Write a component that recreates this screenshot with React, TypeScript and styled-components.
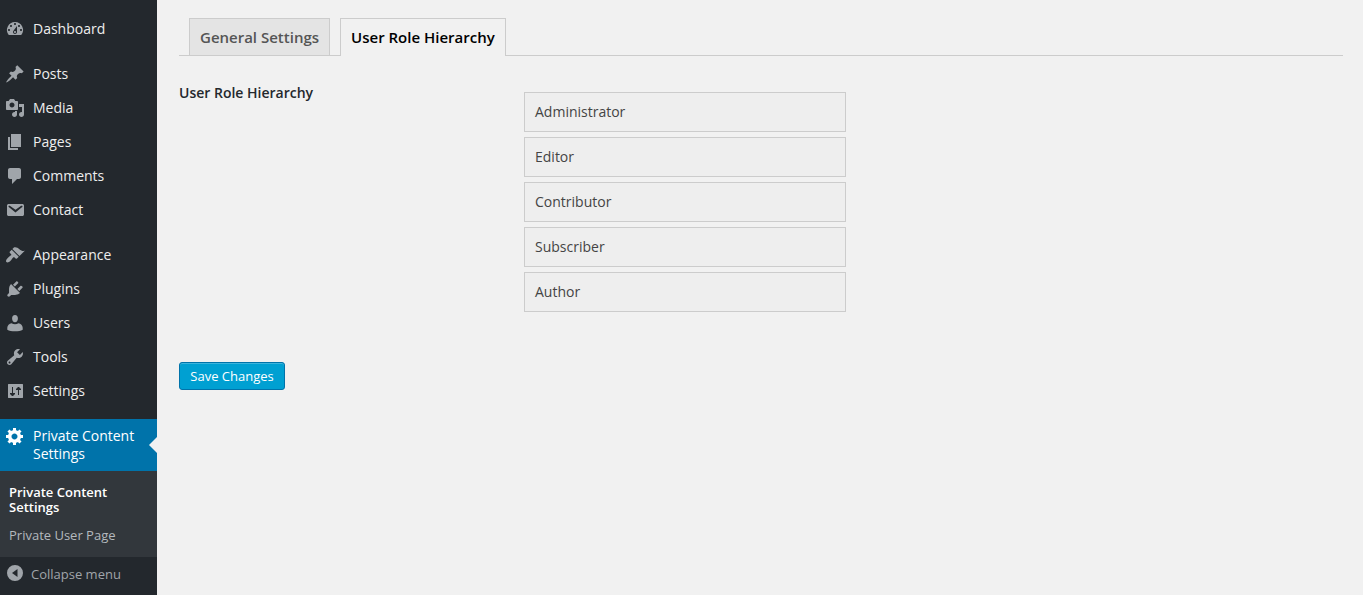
import React from "react";
import styled, { createGlobalStyle } from "styled-components";

const GlobalStyle = createGlobalStyle`
  *, *::before, *::after { box-sizing: border-box; }
  body {
    margin: 0;
    background: #f1f1f1;
    color: #444;
    font-family: "Open Sans", sans-serif;
    font-size: 14px;
    line-height: 18px;
  }
  ul { list-style: none; margin: 0; padding: 0; }
`;

const Shell = styled.div`
  display: flex;
  min-height: 100vh;
`;

const Sidebar = styled.nav`
  flex: none;
  width: 157px;
  padding-top: 12px;
  background: #23282d;
`;

const MenuGroup = styled.ul`
  margin-bottom: 11px;
`;

const MenuLink = styled.a<{ $active?: boolean }>`
  position: relative;
  display: flex;
  align-items: flex-start;
  gap: 8px;
  padding: 8px 8px 8px 5px;
  color: ${(p) => (p.$active ? "#fff" : "#eee")};
  background: ${(p) => (p.$active ? "#0073aa" : "transparent")};
  text-decoration: none;

  &::after {
    content: ${(p) => (p.$active ? '""' : "none")};
    position: absolute;
    top: 50%;
    right: 0;
    transform: translateY(-50%);
    border: 8px solid transparent;
    border-left-width: 0;
    border-right-color: #f1f1f1;
  }
`;

const Glyph = styled.svg<{ $active?: boolean }>`
  flex: none;
  width: 20px;
  height: 20px;
  margin: -1px 0;
  fill: ${(p) => (p.$active ? "#fff" : "#a0a5aa")};
`;

const Submenu = styled.ul`
  display: grid;
  gap: 1px;
  padding: 8px 0;
  background: #32373c;
`;

const SubmenuLink = styled.a<{ $current?: boolean }>`
  display: block;
  padding: 6px 9px;
  color: ${(p) => (p.$current ? "#fff" : "#b4b9be")};
  font-size: 13px;
  font-weight: ${(p) => (p.$current ? 600 : 400)};
  line-height: 15px;
  text-decoration: none;
`;

const CollapseButton = styled.button`
  display: flex;
  align-items: center;
  gap: 6px;
  width: 100%;
  height: 34px;
  padding: 0 5px;
  border: 0;
  background: transparent;
  color: #a0a5aa;
  font: inherit;
  font-size: 13px;
  cursor: pointer;
`;

const Content = styled.main`
  flex: 1;
  min-width: 0;
  padding: 18px 20px 20px 22px;
`;

const Tabs = styled.nav`
  display: flex;
  gap: 10px;
  padding-left: 10px;
  border-bottom: 1px solid #ccc;
`;

const Tab = styled.a<{ $active?: boolean }>`
  margin-bottom: ${(p) => (p.$active ? "-1px" : "0")};
  padding: ${(p) => (p.$active ? "6px 10px 7px" : "6px 10px")};
  border: 1px solid #ccc;
  border-bottom: 0;
  background: ${(p) => (p.$active ? "#f1f1f1" : "#e4e4e4")};
  color: ${(p) => (p.$active ? "#000" : "#555")};
  font-size: 15px;
  font-weight: 600;
  line-height: 24px;
  text-decoration: none;
  white-space: nowrap;
`;

const FormRow = styled.section`
  display: grid;
  grid-template-columns: 345px minmax(0, 322px);
  padding: 36px 0 50px;
`;

const RowTitle = styled.h2`
  margin: -8px 0 0;
  color: #23282d;
  font-size: 14px;
  font-weight: 600;
  line-height: 18px;
`;

const RoleList = styled.ul`
  display: grid;
  gap: 5px;
`;

const RoleItem = styled.li`
  padding: 10px;
  border: 1px solid #ccc;
  background: #eee;
  cursor: move;
`;

const SaveButton = styled.button`
  min-width: 106px;
  height: 28px;
  padding: 0 10px;
  border: 1px solid #0073aa;
  border-radius: 3px;
  background: #00a0d2;
  box-shadow: inset 0 1px 0 rgba(120, 200, 230, 0.5);
  color: #fff;
  font: inherit;
  font-size: 13px;
  line-height: 26px;
  white-space: nowrap;
  cursor: pointer;
`;

const icons = {
  dashboard:
    "M3.76 16h12.48A7.998 7.998 0 0 0 10 3a7.998 7.998 0 0 0-6.24 13zM10 4c.55 0 1 .45 1 1s-.45 1-1 1-1-.45-1-1 .45-1 1-1zM6 6c.55 0 1 .45 1 1s-.45 1-1 1-1-.45-1-1 .45-1 1-1zm8 0c.55 0 1 .45 1 1s-.45 1-1 1-1-.45-1-1 .45-1 1-1zm-5.37 5.55L12 7v6c0 1.1-.9 2-2 2s-2-.9-2-2c0-.57.24-1.08.63-1.45zM4 10c.55 0 1 .45 1 1s-.45 1-1 1-1-.45-1-1 .45-1 1-1zm12 0c.55 0 1 .45 1 1s-.45 1-1 1-1-.45-1-1 .45-1 1-1zm-5 3c0-.55-.45-1-1-1s-1 .45-1 1 .45 1 1 1 1-.45 1-1z",
  pin: "M10.44 3.02l1.82-1.82 6.36 6.35-1.83 1.82c-1.05-.68-2.48-.57-3.41.36l-.75.75c-.92.93-1.04 2.35-.35 3.41l-1.83 1.82-2.41-2.41-2.8 2.79c-.42.42-3.38 2.71-3.8 2.29s1.86-3.39 2.28-3.81l2.79-2.79L4.1 9.36l1.83-1.82c1.05.69 2.48.57 3.4-.36l.75-.75c.93-.92 1.05-2.35.36-3.41z",
  media:
    "M13 11V4c0-.55-.45-1-1-1h-1.67L9 1H5L3.67 3H2c-.55 0-1 .45-1 1v7c0 .55.45 1 1 1h10c.55 0 1-.45 1-1zM7 4.5c1.38 0 2.5 1.12 2.5 2.5S8.38 9.5 7 9.5 4.5 8.38 4.5 7 5.62 4.5 7 4.5zM14 6h5v10.5c0 1.38-1.12 2.5-2.5 2.5S14 17.88 14 16.5s1.12-2.5 2.5-2.5c.17 0 .34.02.5.05V9h-3V6zm-4 8.05V13h2v3.5c0 1.38-1.12 2.5-2.5 2.5S7 17.88 7 16.5 8.12 14 9.5 14c.17 0 .34.02.5.05z",
  page: "M6 15V2h10v13H6zm-1 1h8v2H3V5h2v11z",
  comment:
    "M5 2h9c1.1 0 2 .9 2 2v7c0 1.1-.9 2-2 2h-2l-5 5v-5H5c-1.1 0-2-.9-2-2V4c0-1.1.9-2 2-2z",
  email:
    "M3.87 4h13.25C18.37 4 19 4.59 19 5.79v8.42c0 1.19-.63 1.79-1.88 1.79H3.87c-1.25 0-1.88-.6-1.88-1.79V5.79c0-1.2.63-1.79 1.88-1.79zm6.62 8.6l6.74-5.53c.24-.2.43-.66.13-1.07-.29-.41-.82-.42-1.17-.17l-5.7 3.86L4.8 5.83c-.35-.25-.88-.24-1.17.17-.3.41-.11.87.13 1.07z",
  brush:
    "M14.48 11.06L7.41 3.99l1.5-1.5c.5-.56 2.3-.47 3.51.32 1.21.8 1.43 1.28 2.91 2.1 1.18.64 2.45 1.26 4.45.85zm-.71.71L6.7 4.7 4.93 6.47c-.39.39-.39 1.02 0 1.41l1.06 1.06c.39.39.39 1.03 0 1.42-.6.6-1.43 1.11-2.21 1.69-.35.26-.7.53-1.01.84C1.43 14.23.4 16.08 1.4 17.07c.99 1 2.84-.03 4.18-1.36.31-.31.58-.66.85-1.02.57-.78 1.08-1.61 1.69-2.21.39-.39 1.02-.39 1.41 0l1.06 1.06c.39.39 1.02.39 1.41 0z",
  plug: "M13.11 4.36L9.87 7.6 8 5.73l3.24-3.24c.35-.34 1.05-.2 1.56.32.52.51.66 1.21.31 1.55zm-8 1.77l.91-1.12 9.01 9.01-1.19.84c-.71.71-2.63 1.16-3.82 1.16H6.14L4.9 17.26c-.59.59-1.54.59-2.12 0-.59-.58-.59-1.53 0-2.12l1.24-1.24v-3.88c0-1.13.4-3.19 1.09-3.89zm7.26 3.97l3.24-3.24c.34-.35 1.04-.21 1.55.31.52.51.66 1.21.31 1.55l-3.24 3.25z",
  user: "M10 2c1.9 0 2.9 1.5 2.9 3.4S11.7 9.300 10 9.300 7.100 7.300 7.100 5.400 8.100 2 10 2zM6.600 10.200c1 .7 2.100 1 3.400 1s2.400-.3 3.400-1c2.400.2 4.300 2.300 4.300 4.600v1.900c-1.700 1-4.600 1.500-7.700 1.500s-6-.5-7.700-1.500v-1.900c0-2.300 1.900-4.400 4.300-4.600z",
  wrench:
    "M16.68 9.77c-1.34 1.34-3.3 1.67-4.95.99l-5.41 6.52c-.99.99-2.59.99-3.58 0s-.99-2.59 0-3.57l6.52-5.42c-.68-1.65-.35-3.61.99-4.95 1.28-1.28 3.12-1.62 4.72-1.06l-2.89 2.89 2.82 2.82 2.86-2.87c.53 1.58.18 3.39-1.08 4.65zM3.81 16.21c.4.39 1.04.39 1.43 0 .4-.4.4-1.04 0-1.43-.39-.4-1.03-.4-1.43 0-.39.39-.39 1.03 0 1.43z",
  sliders:
    "M3.500 3h14c.3 0 .5.2.5.5v13c0 .3-.2.5-.5.5h-14c-.3 0-.5-.2-.5-.5v-13c0-.3.2-.5.5-.5zM7 6v6H5v1l2 2h1l2-2v-1H8V6zM13 14V9h-2V8l2-2h1l2 2v1h-2v5z",
  gear: "M18 12h-2.18c-.17.7-.44 1.35-.81 1.93l1.54 1.54-2.1 2.1-1.54-1.54c-.58.36-1.23.63-1.91.79V19H8v-2.18c-.68-.16-1.33-.43-1.91-.79l-1.54 1.54-2.12-2.12 1.54-1.54c-.36-.58-.63-1.23-.79-1.91H1V9.03h2.17c.16-.7.44-1.35.8-1.94L2.43 5.55l2.1-2.1 1.54 1.54c.58-.37 1.24-.64 1.93-.81V2h3v2.18c.68.16 1.33.43 1.91.79l1.54-1.54 2.12 2.12-1.54 1.54c.36.59.64 1.24.8 1.94H18V12zm-8.5 1.5c1.66 0 3-1.34 3-3s-1.34-3-3-3-3 1.34-3 3 1.34 3 3 3z",
  collapse:
    "M10 1a8 8 0 1 0 0 16a8 8 0 1 0 0-16zM12.500 5v8L7 9z",
};

type IconName = keyof typeof icons;

function Icon({ name, active }: { name: IconName; active?: boolean }) {
  return (
    <Glyph viewBox="0 0 20 20" aria-hidden="true" $active={active}>
      <path fillRule="evenodd" d={icons[name]} />
    </Glyph>
  );
}

const menuGroups: { label: string; icon: IconName }[][] = [
  [{ label: "Dashboard", icon: "dashboard" }],
  [
    { label: "Posts", icon: "pin" },
    { label: "Media", icon: "media" },
    { label: "Pages", icon: "page" },
    { label: "Comments", icon: "comment" },
    { label: "Contact", icon: "email" },
  ],
  [
    { label: "Appearance", icon: "brush" },
    { label: "Plugins", icon: "plug" },
    { label: "Users", icon: "user" },
    { label: "Tools", icon: "wrench" },
    { label: "Settings", icon: "sliders" },
  ],
];

const roles = ["Administrator", "Editor", "Contributor", "Subscriber", "Author"];

export default function App() {
  return (
    <>
      <GlobalStyle />
      <Shell>
        <Sidebar>
          {menuGroups.map((group) => (
            <MenuGroup key={group[0].label}>
              {group.map((item) => (
                <li key={item.label}>
                  <MenuLink href="#">
                    <Icon name={item.icon} />
                    <span>{item.label}</span>
                  </MenuLink>
                </li>
              ))}
            </MenuGroup>
          ))}
          <ul>
            <li>
              <MenuLink href="#" $active>
                <Icon name="gear" active />
                <span>Private Content Settings</span>
              </MenuLink>
              <Submenu>
                <li>
                  <SubmenuLink href="#" $current>
                    Private Content Settings
                  </SubmenuLink>
                </li>
                <li>
                  <SubmenuLink href="#">Private User Page</SubmenuLink>
                </li>
              </Submenu>
            </li>
          </ul>
          <CollapseButton type="button">
            <Icon name="collapse" />
            <span>Collapse menu</span>
          </CollapseButton>
        </Sidebar>
        <Content>
          <Tabs>
            <Tab href="#">General Settings</Tab>
            <Tab href="#" $active>
              User Role Hierarchy
            </Tab>
          </Tabs>
          <FormRow>
            <RowTitle>User Role Hierarchy</RowTitle>
            <RoleList>
              {roles.map((role) => (
                <RoleItem key={role}>{role}</RoleItem>
              ))}
            </RoleList>
          </FormRow>
          <SaveButton type="button">Save Changes</SaveButton>
        </Content>
      </Shell>
    </>
  );
}
